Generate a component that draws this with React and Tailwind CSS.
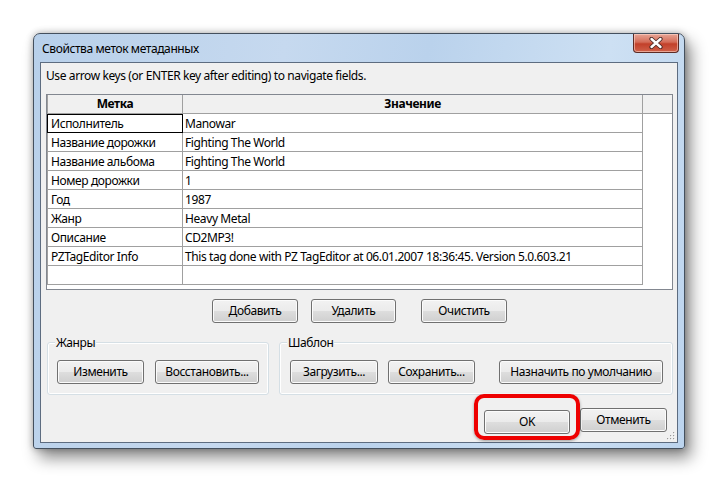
import React from 'react';

const rows = [
  ['Исполнитель', 'Manowar'],
  ['Название дорожки', 'Fighting The World'],
  ['Название альбома', 'Fighting The World'],
  ['Номер дорожки', '1'],
  ['Год', '1987'],
  ['Жанр', 'Heavy Metal'],
  ['Описание', 'CD2MP3!'],
  ['PZTagEditor Info', 'This tag done with PZ TagEditor at 06.01.2007 18:36:45. Version 5.0.603.21'],
  ['', ''],
];

// win7-style push button
const Btn = ({ children, className = '' }) => (
  <button
    className={`h-[24px] shrink-0 rounded-[3px] border border-[#707070] bg-[linear-gradient(#f2f2f2_0%,#ebebeb_48%,#dddddd_52%,#cfcfcf_100%)] text-[12px] tracking-[-0.4px] text-black leading-none shadow-[inset_0_0_0_1px_#fbfbfb] ${className}`}
  >
    {children}
  </button>
);

const GroupBox = ({ title, className = '', children }) => (
  <div className={`relative h-[53px] rounded-[3px] border border-[#d5dfe5] shadow-[inset_0_0_0_1px_#fff] ${className}`}>
    <span className="absolute left-[7px] top-[-8px] bg-[#f0f0f0] px-[1px] text-[12px] leading-[16px] text-black">{title}</span>
    {children}
  </div>
);

const CloseX = () => (
  <svg width="14" height="12" viewBox="0 0 14 12">
    <path d="M2.5 2 L11.5 10 M11.5 2 L2.5 10" stroke="#4a2a26" strokeWidth="4.2" strokeLinecap="round" />
    <path d="M2.5 2 L11.5 10 M11.5 2 L2.5 10" stroke="#ffffff" strokeWidth="2.4" strokeLinecap="round" />
  </svg>
);

export default function App() {
  return (
    <div className="w-[719px] h-[484px] overflow-hidden bg-white pl-[33px] pt-[33px] font-['Noto_Sans',sans-serif] tracking-[-0.4px]">
      {/* окно */}
      <div className="relative flex h-[416px] w-[652px] flex-col rounded-t-[7px] rounded-b-[3px] border border-[#44505e] bg-[linear-gradient(100deg,#b8d0ea_0%,#c6d9ef_35%,#bad2ec_55%,#cde0f3_80%,#bcd4ee_100%)] pl-[6px] pr-[6px] pb-[5px] shadow-[6px_9px_16px_rgba(0,0,0,0.45),0_0_7px_rgba(0,0,0,0.3)]">
        {/* заголовок */}
        <div className="flex h-[28px] shrink-0 items-start">
          <span className="mt-[7px] ml-[2px] text-[12px] leading-[16px] text-black">Свойства меток метаданных</span>
          <div className="ml-auto mr-[-1px] flex h-[19px] w-[46px] items-center justify-center rounded-b-[4px] border border-t-0 border-[#5c2b25] bg-[linear-gradient(#e7a595_0%,#d46c58_45%,#c2402a_55%,#d0614a_100%)] shadow-[inset_0_0_0_1px_rgba(255,220,210,0.55)]">
            <CloseX />
          </div>
        </div>

        {/* клиентская область */}
        <div className="relative flex flex-1 flex-col border border-[#5d6c80] bg-[#f0f0f0]">
          <div className="ml-[5px] mt-[5px] h-[16px] text-[12px] leading-[16px] text-black">
            Use arrow keys (or ENTER key after editing) to navigate fields.
          </div>

          {/* таблица */}
          <div className="ml-[5px] mt-[10px] flex h-[196px] w-[627px] flex-col border border-[#828790] bg-white">
            <div className="flex h-[19px] shrink-0 border-b border-[#a0a0a0] bg-[#f0f0f0] text-[12px] font-bold text-black">
              <div className="flex w-[136px] items-center justify-center border-l border-r border-[#a0a0a0]">Метка</div>
              <div className="flex w-[460px] items-center justify-center border-r border-[#a0a0a0]">Значение</div>
            </div>
            {rows.map((r, i) => (
              <div key={i} className="flex h-[19px] shrink-0 text-[12px] leading-[19px] text-black">
                <div
                  className={`w-[136px] whitespace-nowrap border-l border-r border-b pl-[3px] ${
                    i === 0 ? 'border-black outline outline-1 -outline-offset-1 outline-black' : 'border-[#a0a0a0]'
                  }`}
                >
                  {r[0]}
                </div>
                <div className="w-[460px] whitespace-nowrap border-b border-r border-[#a0a0a0] pl-[2px]">{r[1]}</div>
              </div>
            ))}
          </div>

          {/* кнопки таблицы */}
          <div className="mt-[9px] flex">
            <Btn className="ml-[171px] w-[86px]">Добавить</Btn>
            <Btn className="ml-[13px] w-[85px]">Удалить</Btn>
            <Btn className="ml-[25px] w-[86px]">Очистить</Btn>
          </div>

          {/* группы */}
          <div className="mt-[19px] flex">
            <GroupBox title="Жанры" className="ml-[6px] w-[222px]">
              <div className="mt-[17px] flex">
                <Btn className="ml-[9px] w-[87px]">Изменить</Btn>
                <Btn className="ml-[11px] w-[104px]">Восстановить...</Btn>
              </div>
            </GroupBox>
            <GroupBox title="Шаблон" className="ml-[10px] w-[394px]">
              <div className="mt-[17px] flex">
                <Btn className="ml-[10px] w-[88px]">Загрузить...</Btn>
                <Btn className="ml-[10px] w-[87px]">Сохранить...</Btn>
                <Btn className="ml-[24px] w-[164px]">Назначить по умолчанию</Btn>
              </div>
            </GroupBox>
          </div>

          {/* OK / Отменить */}
          <div className="mt-[13px] flex">
            <div className="relative ml-[443px]">
              <Btn className="w-[86px]">OK</Btn>
              <div className="pointer-events-none absolute left-[-10px] top-[-14px] h-[46px] w-[106px] rounded-[10px] border-[4px] border-[#ee0000] shadow-[0_1px_3px_rgba(0,0,0,0.35)]" />
            </div>
            <Btn className="ml-[10px] w-[87px]">Отменить</Btn>
          </div>

          {/* уголок изменения размера */}
          <svg className="absolute bottom-[2px] right-[2px]" width="10" height="10" viewBox="0 0 10 10">
            {[[8, 2], [8, 5], [5, 5], [8, 8], [5, 8], [2, 8]].map(([x, y], k) => (
              <g key={k}>
                <rect x={x + 0.6} y={y + 0.6} width="1.2" height="1.2" fill="#fff" />
                <rect x={x} y={y} width="1.2" height="1.2" fill="#9a9a9a" />
              </g>
            ))}
          </svg>
        </div>
      </div>
    </div>
  );
}
